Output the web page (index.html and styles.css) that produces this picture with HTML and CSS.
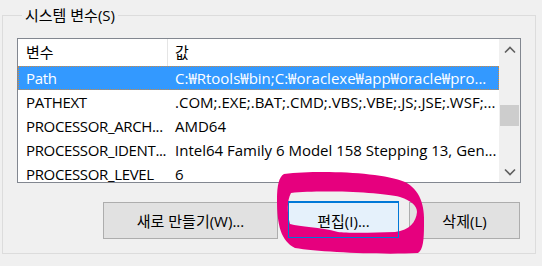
FILE: index.html
```html
<!DOCTYPE html>
<html lang="ko">
<head>
    <meta charset="UTF-8">
    <title>시스템 변수</title>
    <link rel="stylesheet" href="styles.css">
</head>
<body>
    <fieldset class="group">
        <legend>시스템 변수(S)</legend>
        <div class="listview">
            <div class="rows">
                <div class="row header">
                    <div class="cell name">변수</div>
                    <div class="cell value">값</div>
                </div>
                <div class="row selected">
                    <div class="cell name">Path</div>
                    <div class="cell value">C:₩Rtools₩bin;C:₩oraclexe₩app₩oracle₩pro...</div>
                </div>
                <div class="row">
                    <div class="cell name">PATHEXT</div>
                    <div class="cell value">.COM;.EXE;.BAT;.CMD;.VBS;.VBE;.JS;.JSE;.WSF;...</div>
                </div>
                <div class="row">
                    <div class="cell name">PROCESSOR_ARCH...</div>
                    <div class="cell value">AMD64</div>
                </div>
                <div class="row">
                    <div class="cell name">PROCESSOR_IDENT...</div>
                    <div class="cell value">Intel64 Family 6 Model 158 Stepping 13, Gen...</div>
                </div>
                <div class="row">
                    <div class="cell name">PROCESSOR_LEVEL</div>
                    <div class="cell value">6</div>
                </div>
            </div>
            <div class="scrollbar">
                <div class="arrow">
                    <svg width="12" height="8" viewBox="0 0 12 8"><path d="M1 6.5 L6 1.5 L11 6.5" fill="none" stroke="#606060" stroke-width="1.6"/></svg>
                </div>
                <div class="track">
                    <div class="thumb"></div>
                </div>
                <div class="arrow">
                    <svg width="12" height="8" viewBox="0 0 12 8"><path d="M1 1.5 L6 6.5 L11 1.5" fill="none" stroke="#606060" stroke-width="1.6"/></svg>
                </div>
            </div>
        </div>
        <div class="buttons">
            <button class="btn wide">새로 만들기(W)...</button>
            <button class="btn focused">편집(I)...</button>
            <button class="btn">삭제(L)</button>
        </div>
    </fieldset>

    <!-- 손으로 그린 표시 -->
    <svg class="marker" width="542" height="266" viewBox="0 0 542 266">
        <path fill="#e6007e" fill-rule="evenodd" d="
            M 284 174 C 320 170, 380 172, 405 182 C 420 190, 425 205, 424 225 C 424 240, 423 250, 418 253 C 380 255, 320 252, 295 248 C 281 241, 277 225, 277 200 C 277 185, 279 177, 284 174 Z
            M 291 193 C 320 190, 380 192, 400 197 C 412 201, 417 206, 417 212 C 416 222, 410 230, 395 232 C 370 233, 345 233, 338 232 C 320 227, 300 227, 290 224 C 287 213, 287 200, 291 193 Z"/>
        <rect x="288.5" y="201.5" width="110" height="36" fill="none" stroke="#0078d7"/>
    </svg>
</body>
</html>
```

FILE: styles.css
```css
body {
    margin: 0;
    width: 542px;
    height: 266px;
    background-color: #f0f0f0;
    font-family: "Open Sans", "Noto Sans CJK KR", sans-serif;
    font-size: 15px;
    color: #000;
    position: relative;
    overflow: hidden;
}
.group {
    margin: 5px 6px 0 2px;
    padding: 0 14px 14px 14px;
    border: 1px solid #dcdcdc;
    min-width: 0;
}
.group legend {
    margin-left: 5px;
    padding: 0 3px;
    line-height: 20px;
}
.listview {
    margin-top: 13px;
    height: 143px;
    border: 1px solid #828790;
    background-color: #fff;
    display: flex;
}
.rows {
    flex: 1;
    overflow: hidden;
}
.row {
    display: flex;
    height: 24px;
    line-height: 24px;
    white-space: nowrap;
}
.row.header {
    height: 27px;
    line-height: 27px;
}
.cell {
    overflow: hidden;
}
.cell.name {
    width: 142px;
    padding-left: 8px;
    letter-spacing: -0.35px;
}
.cell.value {
    flex: 1;
    padding-left: 7px;
}
.header .cell.name {
    border-right: 1px solid #e5e5e5;
    width: 141px;
    letter-spacing: 0;
}
.row.selected {
    background-color: #3399ff;
    color: #fff;
    outline: 1px dotted #d08a40;
    outline-offset: -1px;
}
.scrollbar {
    width: 21px;
    background-color: #f0f0f0;
    display: flex;
    flex-direction: column;
}
.arrow {
    height: 21px;
    display: flex;
    align-items: center;
    justify-content: center;
}
.track {
    flex: 1;
    padding-top: 45px;
}
.thumb {
    margin: 0 1px;
    height: 21px;
    background-color: #cdcdcd;
}
.buttons {
    margin-top: 19px;
    display: flex;
    gap: 10px;
}
.btn {
    width: 111px;
    height: 37px;
    border: 1px solid #adadad;
    background-color: #e1e1e1;
    font-family: inherit;
    font-size: 15px;
    color: #000;
    padding: 0;
}
.btn.wide {
    width: 175px;
    margin-left: 86px;
}
.btn.focused {
    border-color: #0078d7;
    background-color: #e5f1fb;
}
.marker {
    position: absolute;
    left: 0;
    top: 0;
    pointer-events: none;
}
```
